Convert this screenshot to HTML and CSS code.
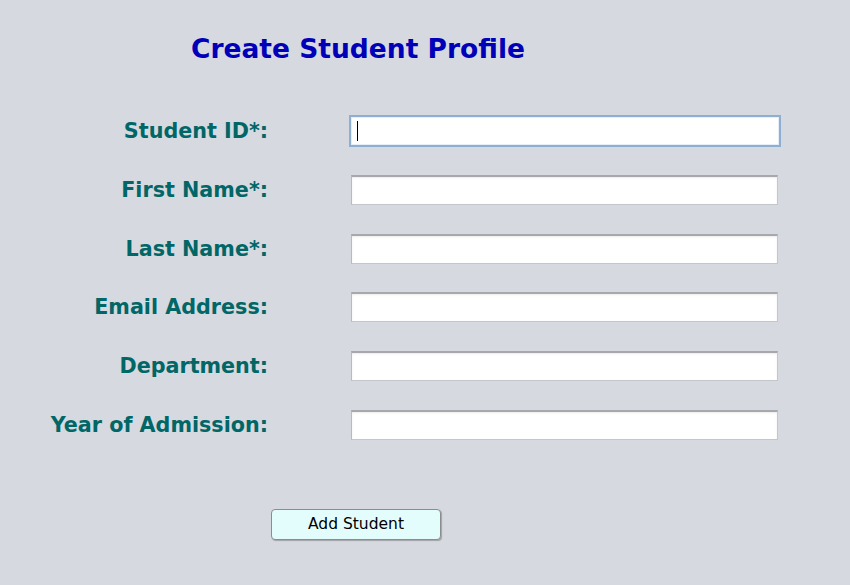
FILE: index.html
```html
<!DOCTYPE html>
<html>
<head>
<meta charset="utf-8">
<link rel="stylesheet" href="styles.css">
</head>
<body>
<div class="page">
  <h1 class="title">Create Student Profile</h1>
  <form class="form">
    <label class="label">Student ID*:</label>
    <div class="field focused"><input class="input" type="text"><span class="caret"></span></div>
    <label class="label">First Name*:</label>
    <div class="field"><input class="input" type="text"></div>
    <label class="label">Last Name*:</label>
    <div class="field"><input class="input" type="text"></div>
    <label class="label">Email Address:</label>
    <div class="field"><input class="input" type="text"></div>
    <label class="label">Department:</label>
    <div class="field"><input class="input" type="text"></div>
    <label class="label">Year of Admission:</label>
    <div class="field"><input class="input" type="text"></div>
  </form>
  <div class="actions"><button class="btn" type="button">Add Student</button></div>
</div>
</body>
</html>
```
FILE: styles.css
```css
html, body {
  margin: 0;
  padding: 0;
  background: #d6d9e0;
  height: 100%;
}
.page {
  width: 850px;
  height: 585px;
  background: #d6d9e0;
  font-family: "DejaVu Sans", sans-serif;
  padding-top: 30px;
  box-sizing: border-box;
}
.title {
  margin: 0 0 0 191px;
  font-size: 26.5px;
  font-weight: bold;
  color: #0000b8;
  line-height: 38px;
}
.form {
  margin-top: 48px;
  display: grid;
  grid-template-columns: 268px 427px;
  column-gap: 83px;
  row-gap: 28.75px;
  align-items: center;
}
.label {
  text-align: right;
  font-size: 20.7px;
  font-weight: bold;
  color: #006666;
  line-height: 30px;
}
.field {
  position: relative;
  height: 30px;
}
.input {
  display: block;
  box-sizing: border-box;
  width: 427px;
  height: 30px;
  margin: 0;
  border: 1px solid #c4c6ca;
  border-top: 2px solid #a6a8ab;
  border-left-color: #b8babd;
  background: #ffffff;
  outline: none;
  box-shadow: inset 0 1px 2px rgba(0,0,0,0.08);
}
.focused .input {
  width: 432px;
  height: 32px;
  margin: -1px 0 0 -2px;
  border: 2px solid #8eaed2;
  box-shadow: inset 0 0 0 1px #e6eef8;
}
.caret {
  position: absolute;
  left: 6px;
  top: 5px;
  width: 1px;
  height: 20px;
  background: #000;
}
.actions {
  margin: 69px 0 0 271px;
}
.btn {
  box-sizing: border-box;
  width: 170px;
  height: 31px;
  background: #e3fdfd;
  border: 1px solid #8a8c8e;
  border-radius: 4px;
  box-shadow: 1px 1px 1px rgba(0,0,0,0.25);
  font-family: "DejaVu Sans", sans-serif;
  font-size: 15.5px;
  color: #000;
  padding: 0;
}
```
